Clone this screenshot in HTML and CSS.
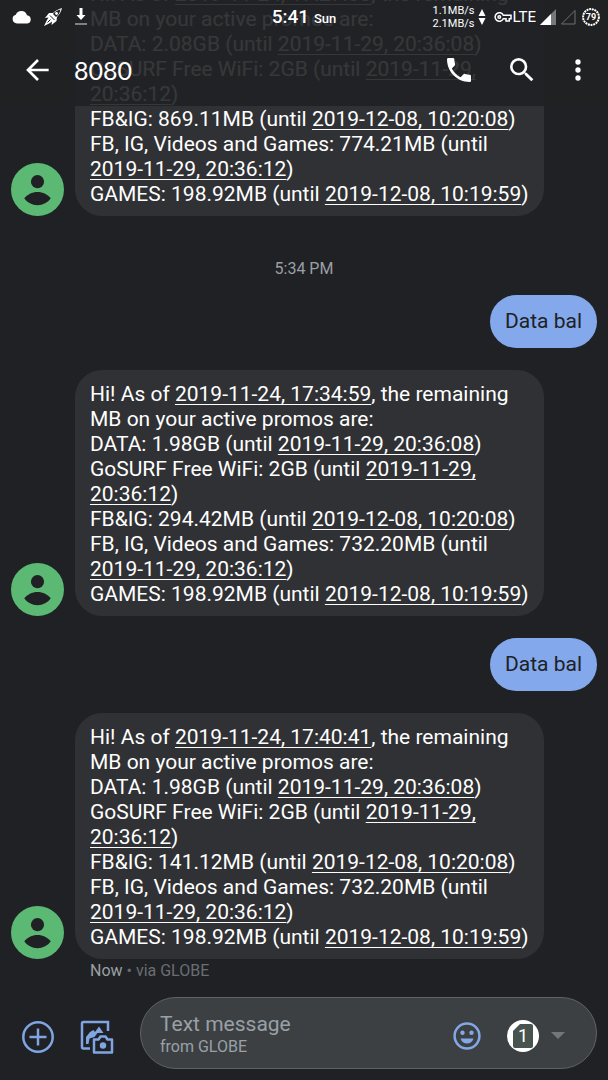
FILE: index.html
```html
<!DOCTYPE html>
<html lang="en">
<head>
    <meta charset="UTF-8">
    <meta name="viewport" content="width=device-width, initial-scale=1.0">
    <title>8080 - Messages</title>
    <link rel="stylesheet" href="styles.css">
</head>
<body>
    <header class="top">
        <div class="status-bar">
            <div class="status-left">
                <svg width="20" height="14" viewBox="0 0 20 14" fill="#fff"><path d="M5 13.500A4.500 4.500 0 0 1 3.800 4.700 6 6 0 0 1 15 5.200 4.200 4.200 0 0 1 15.300 13.500z"/></svg>
                <svg width="20" height="20" viewBox="0 0 20 20"><path d="M19 1c-4 1-7 3-9 5l-4 0-4 5 3.500-.5L4 13l-3 6 6-3 2-1.500L8.500 18l5-4 .5-4c2.500-2.500 4-5 5-9z" fill="#fff"/><path d="M17.500 2.500c-4 1-6 2.500-7.500 4.500l3 3c2-1.500 3.500-3.500 4.500-7.500z" fill="#202124"/><circle cx="13.500" cy="6.500" r="1.400" fill="#fff"/><path d="M7 8.500l4.500 4.500M7.500 12.500l-3 3" stroke="#202124" fill="none"/></svg>
                <svg width="14" height="18" viewBox="0 0 14 18"><path d="M5.500 0h3v7h3L7 12 2.500 7h3z" fill="#fff"/><path d="M1 16h12" stroke="#a0a1a3" stroke-width="1.500"/></svg>
            </div>
            <div class="clock">5:41 <span class="day">Sun</span></div>
            <div class="status-right">
                <div class="speed">1.1MB/s<br>2.1MB/s</div>
                <svg class="arrows" width="8" height="18" viewBox="0 0 8 18" fill="#fff"><path d="M4 1l3.500 7h-7zM4 17l3.500-7h-7z"/></svg>
                <svg width="18" height="12" viewBox="0 0 18 12" fill="none" stroke="#fff" stroke-width="1.500"><path d="M9.300 4.200a4.300 4.300 0 1 0 0 3.600H12V10h3.300V7.800H17V4.200z"/><circle cx="5.300" cy="6" r="1.300"/></svg>
                <span class="lte">LTE</span>
                <svg width="16" height="16" viewBox="0 0 16 16"><path d="M0 16L16 0v16z" fill="#77787a"/><path d="M0 16L11 5v11z" fill="#fff"/></svg>
                <svg width="16" height="16" viewBox="0 0 16 16"><path d="M1.500 15L15 1.500V15z" fill="none" stroke="#707174"/></svg>
                <div class="battery">
                    <svg width="18" height="18" viewBox="0 0 18 18" fill="none"><circle cx="9" cy="9" r="7.900" stroke="#fff" stroke-width="2" stroke-dasharray="2 .7"/></svg>
                    <span class="battery-level">79</span>
                </div>
            </div>
        </div>
        <div class="toolbar">
            <button type="button" class="icon-btn" aria-label="Back">
                <svg width="32" height="32" viewBox="0 0 24 24" fill="none" stroke="#fff" stroke-width="2"><path d="M20 12H5M12 4.500L4.500 12l7.500 7.500"/></svg>
            </button>
            <h1 class="title">8080</h1>
            <div class="actions">
                <button type="button" class="icon-btn call" aria-label="Call">
                    <svg width="32" height="32" viewBox="0 0 24 24" fill="#fff"><path d="M6.620 10.790c1.440 2.830 3.760 5.140 6.590 6.590l2.200-2.200c.27-.27.67-.36 1.020-.24 1.120.37 2.330.57 3.570.57.55 0 1 .45 1 1V20c0 .55-.45 1-1 1-9.390 0-17-7.610-17-17 0-.55.45-1 1-1h3.500c.55 0 1 .45 1 1 0 1.250.2 2.450.57 3.570.11.35.03.74-.25 1.020l-2.200 2.200z"/></svg>
                </button>
                <button type="button" class="icon-btn" aria-label="Search">
                    <svg width="32" height="32" viewBox="0 0 24 24" fill="#fff"><path d="M15.500 14h-.79l-.28-.27A6.471 6.471 0 0 0 16 9.500 6.500 6.500 0 1 0 9.500 16c1.610 0 3.090-.59 4.230-1.570l.27.28v.79l5 4.990L20.490 19l-4.990-5zm-6 0C7.010 14 5 11.990 5 9.500S7.010 5 9.500 5 14 7.010 14 9.500 11.990 14 9.500 14z"/></svg>
                </button>
                <button type="button" class="icon-btn" aria-label="More options">
                    <svg width="32" height="32" viewBox="0 0 24 24" fill="#fff"><circle cx="12" cy="6" r="2"/><circle cx="12" cy="12" r="2"/><circle cx="12" cy="18" r="2"/></svg>
                </button>
            </div>
        </div>
    </header>

    <main class="chat">
        <div class="received">
            <svg class="avatar" viewBox="0 0 54 54"><circle cx="27" cy="27" r="27" fill="#5bb974"/><circle cx="27" cy="19" r="6.700" fill="#202124"/><path d="M13.500 36c3-4 8-6.500 13.500-6.500S37.500 32 40.500 36c-3 4.500-8 7-13.500 7s-10.500-2.500-13.500-7z" fill="#202124"/></svg>
            <p class="bubble">Hi! As of <a href="#">2019-11-24, 17:27:03</a>, the remaining MB on your active promos are:<br>
            DATA: 2.08GB (until <a href="#">2019-11-29, 20:36:08</a>)<br>
            GoSURF Free WiFi: 2GB (until <a href="#">2019-11-29, 20:36:12</a>)<br>
            FB&amp;IG: 869.11MB (until <a href="#">2019-12-08, 10:20:08</a>)<br>
            FB, IG, Videos and Games: 774.21MB (until <a href="#">2019-11-29, 20:36:12</a>)<br>
            GAMES: 198.92MB (until <a href="#">2019-12-08, 10:19:59</a>)</p>
        </div>

        <div class="timestamp">5:34 PM</div>

        <p class="sent">Data bal</p>

        <div class="received">
            <svg class="avatar" viewBox="0 0 54 54"><circle cx="27" cy="27" r="27" fill="#5bb974"/><circle cx="27" cy="19" r="6.700" fill="#202124"/><path d="M13.500 36c3-4 8-6.500 13.500-6.500S37.500 32 40.500 36c-3 4.500-8 7-13.500 7s-10.500-2.500-13.500-7z" fill="#202124"/></svg>
            <p class="bubble">Hi! As of <a href="#">2019-11-24, 17:34:59</a>, the remaining MB on your active promos are:<br>
            DATA: 1.98GB (until <a href="#">2019-11-29, 20:36:08</a>)<br>
            GoSURF Free WiFi: 2GB (until <a href="#">2019-11-29, 20:36:12</a>)<br>
            FB&amp;IG: 294.42MB (until <a href="#">2019-12-08, 10:20:08</a>)<br>
            FB, IG, Videos and Games: 732.20MB (until <a href="#">2019-11-29, 20:36:12</a>)<br>
            GAMES: 198.92MB (until <a href="#">2019-12-08, 10:19:59</a>)</p>
        </div>

        <p class="sent">Data bal</p>

        <div class="received">
            <svg class="avatar" viewBox="0 0 54 54"><circle cx="27" cy="27" r="27" fill="#5bb974"/><circle cx="27" cy="19" r="6.700" fill="#202124"/><path d="M13.500 36c3-4 8-6.500 13.500-6.500S37.500 32 40.500 36c-3 4.500-8 7-13.500 7s-10.500-2.500-13.500-7z" fill="#202124"/></svg>
            <p class="bubble">Hi! As of <a href="#">2019-11-24, 17:40:41</a>, the remaining MB on your active promos are:<br>
            DATA: 1.98GB (until <a href="#">2019-11-29, 20:36:08</a>)<br>
            GoSURF Free WiFi: 2GB (until <a href="#">2019-11-29, 20:36:12</a>)<br>
            FB&amp;IG: 141.12MB (until <a href="#">2019-12-08, 10:20:08</a>)<br>
            FB, IG, Videos and Games: 732.20MB (until <a href="#">2019-11-29, 20:36:12</a>)<br>
            GAMES: 198.92MB (until <a href="#">2019-12-08, 10:19:59</a>)</p>
        </div>
        <div class="meta">Now <span class="via">• via GLOBE</span></div>
    </main>

    <form class="composer">
        <button type="button" class="icon-btn attach" aria-label="Add">
            <svg width="32" height="32" viewBox="0 0 32 32" fill="none" stroke="#8ab4f8" stroke-width="2.500" opacity=".9"><circle cx="16" cy="16" r="14.700"/><path d="M16 7.500v17M7.500 16h17"/></svg>
        </button>
        <button type="button" class="icon-btn attach" aria-label="Attach photo">
            <svg width="34" height="34" viewBox="0 0 34 34" fill="none" stroke="#8ab4f8" stroke-width="2.500" opacity=".9"><path d="M10 28.500H3.500A1.500 1.500 0 0 1 2 27V3.500A1.500 1.500 0 0 1 3.500 2h24.500v9"/><path d="M6 24v-7l4-5 3.500-2 1.500 2 4-5.500 4.500 6.500h-6l-3 4-5 1.500-1 5.500z" fill="#8ab4f8" stroke="none"/><path d="M14 19.500h4.500l2-3h5l2 3h4.500v13H14z" stroke-linejoin="round"/><circle cx="23" cy="25.500" r="3.200" fill="#8ab4f8" stroke="none"/></svg>
        </button>
        <div class="message-box">
            <div class="field">
                <input type="text" id="message" class="message-input" placeholder="Text message">
                <label for="message" class="sim-name">from GLOBE</label>
            </div>
            <button type="button" class="icon-btn emoji" aria-label="Emoji">
                <svg width="28" height="28" viewBox="0 0 28 28" fill="#8ab4f8" opacity=".9"><circle cx="14" cy="14" r="12.400" fill="none" stroke="#8ab4f8" stroke-width="2.500"/><circle cx="9.500" cy="10.800" r="2.200"/><circle cx="18.500" cy="10.800" r="2.200"/><path d="M7.500 16.500h13c-1 3.300-3.500 5-6.500 5s-5.500-1.700-6.500-5z"/></svg>
            </button>
            <button type="button" class="sim-btn" aria-label="Choose SIM">
                <span class="sim">
                    <svg width="20" height="24" viewBox="0 0 20 24"><path d="M7 0h11a2 2 0 0 1 2 2v20a2 2 0 0 1-2 2H2a2 2 0 0 1-2-2V7z" fill="#48534f"/></svg>
                    <span class="sim-number">1</span>
                </span>
                <svg width="14" height="8" viewBox="0 0 14 8"><path d="M0 0h14L7 7z" fill="#74777a"/></svg>
            </button>
        </div>
    </form>
</body>
</html>
```
FILE: styles.css
```css
* {
    margin: 0;
    padding: 0;
    box-sizing: border-box;
}

body {
    font-family: Roboto, sans-serif;
    background: #202124;
    color: #fff;
    height: 100vh;
    display: flex;
    flex-direction: column;
    overflow: hidden;
}

svg {
    display: block;
    flex-shrink: 0;
}

button {
    background: none;
    border: none;
    font-family: inherit;
    cursor: pointer;
}

/* header lies over the scrolled conversation */
.top {
    position: absolute;
    top: 0;
    left: 0;
    right: 0;
    background: rgba(32, 33, 36, 0.9);
    z-index: 1;
}

.status-bar {
    display: grid;
    grid-template-columns: 1fr auto 1fr;
    align-items: center;
    height: 33px;
    padding: 0 8px;
}

.status-left {
    display: flex;
    align-items: center;
    gap: 11px;
    padding-left: 4px;
}

.clock {
    font-size: 19px;
    font-weight: 500;
}

.day {
    font-size: 13px;
}

.status-right {
    display: flex;
    align-items: center;
    justify-content: flex-end;
    gap: 4px;
}

.speed {
    font-size: 11px;
    line-height: 13px;
}

.arrows {
    margin-right: 4px;
}

.lte {
    font-size: 15px;
    margin-left: -4px;
}

.battery {
    position: relative;
    margin-left: 2px;
}

.battery-level {
    position: absolute;
    inset: 0;
    font-size: 9px;
    font-weight: 700;
    line-height: 18px;
    text-align: center;
}

.toolbar {
    display: flex;
    align-items: center;
    height: 73px;
    padding: 0 14px 0 22px;
    gap: 20px;
}

.title {
    font-family: Lato, Roboto, sans-serif;
    font-size: 25px;
    font-weight: 400;
    line-height: 32px;
}

.actions {
    display: flex;
    gap: 24px;
    margin-left: auto;
}

.call {
    margin-right: 7px;
}

.chat {
    flex: 1;
    min-height: 0;
    display: flex;
    flex-direction: column;
    justify-content: flex-end;
    overflow: hidden;
    padding: 0 11px;
}

.received {
    display: flex;
    align-items: flex-end;
    gap: 11px;
    flex-shrink: 0;
}

.avatar {
    width: 53px;
    height: 53px;
}

.bubble {
    width: 80%;
    padding: 12px 12px 9px 15px;
    background: #303134;
    border-radius: 27px;
    font-size: 21px;
    line-height: 25px;
}

.bubble a {
    color: inherit;
    text-decoration-thickness: 1px;
    text-underline-offset: 3px;
}

.timestamp {
    margin: 43px 0 16px;
    color: #9aa0a6;
    font-size: 16px;
    line-height: 20px;
    text-align: center;
}

.sent {
    align-self: flex-end;
    padding: 14px 15px;
    background: #83a9ec;
    border-radius: 27px;
    color: #202124;
    font-size: 21px;
    line-height: 25px;
}

.sent + .received {
    margin-top: 22px;
}

.received + .sent {
    margin-top: 22px;
}

.meta {
    margin: 2px 0 0 79px;
    color: #9aa0a6;
    font-size: 16px;
    line-height: 20px;
}

.via {
    color: #6a6e72;
}

.composer {
    display: flex;
    align-items: center;
    gap: 26px;
    padding: 16px 11px 11px 22px;
}

.attach {
    padding-top: 8px;
}

.message-box {
    flex: 1;
    min-width: 0;
    display: flex;
    align-items: center;
    height: 72px;
    padding: 0 31px 0 19px;
    background: #3c4043;
    border: 1px solid #5f6368;
    border-radius: 36px;
}

.field {
    flex: 1;
    min-width: 0;
    padding-top: 2px;
}

.message-input {
    display: block;
    width: 100%;
    background: none;
    border: none;
    outline: none;
    color: #fff;
    font-family: inherit;
    font-size: 21px;
    line-height: 25px;
}

.message-input::placeholder {
    color: #9aa0a6;
    opacity: 1;
}

.sim-name {
    display: block;
    color: #9aa0a6;
    font-size: 16px;
    line-height: 20px;
}

.emoji {
    padding-top: 6px;
}

.sim-btn {
    display: flex;
    align-items: center;
    gap: 12px;
    margin-left: 26px;
    padding-top: 6px;
}

.sim {
    position: relative;
    display: flex;
    align-items: center;
    justify-content: center;
    width: 32px;
    height: 32px;
    background: #fff;
    border-radius: 50%;
}

.sim-number {
    position: absolute;
    inset: 0;
    color: #fff;
    font-size: 18px;
    line-height: 32px;
    text-align: center;
}
```
